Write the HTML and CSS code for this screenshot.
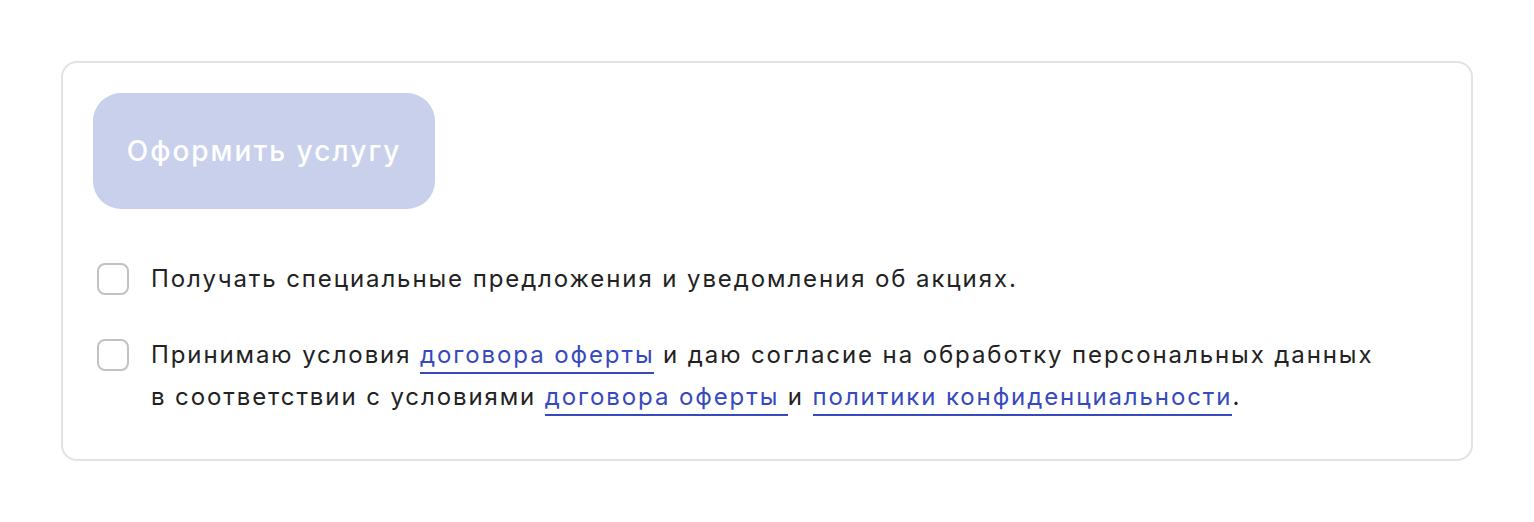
FILE: index.html
```html
<!DOCTYPE html>
<html lang="ru">
<head>
    <meta charset="UTF-8">
    <meta name="viewport" content="width=device-width, initial-scale=1.0">
    <title>Оформить услугу</title>
    <link rel="stylesheet" href="styles.css">
</head>
<body>
    <main class="order">
        <button class="order-btn" disabled>Оформить услугу</button>
        <div class="agree-list">
            <label class="agree">
                <input type="checkbox" class="agree-box">
                <span class="agree-text">Получать специальные предложения и уведомления об акциях.</span>
            </label>
            <label class="agree">
                <input type="checkbox" class="agree-box">
                <span class="agree-text">Принимаю условия <a href="#" class="agree-link">договора оферты</a> и даю согласие на обработку персональных данных<br>в соответствии с условиями <a href="#" class="agree-link">договора оферты </a> и <a href="#" class="agree-link">политики конфиденциальности</a>.</span>
            </label>
        </div>
    </main>
</body>
</html>
```

FILE: styles.css
```css
*{
    margin: 0;
    padding: 0;
    box-sizing: border-box;
}
body{
    background-color: #fff;
    padding: 61px;
    font-family: Inter, "Noto Sans", sans-serif;
    color: #222;
}
.order{
    border: 2px solid #e2e2e2;
    border-radius: 16px;
    padding: 30px 30px 41px;
}
.order-btn{
    display: block;
    width: 342px;
    height: 116px;
    border: none;
    border-radius: 28px;
    background-color: #c9d0ec;
    color: #fff;
    font-family: Inter, "Noto Sans", sans-serif;
    font-size: 28px;
    font-weight: 500;
    letter-spacing: 2px;
}
.agree-list{
    display: flex;
    flex-direction: column;
    gap: 34px;
    margin-top: 49px;
}
.agree{
    display: flex;
    align-items: flex-start;
    gap: 22px;
    padding-left: 4px;
}
.agree-box{
    appearance: none;
    flex: none;
    width: 32px;
    height: 32px;
    margin-top: 5px;
    border: 2px solid #c2c2c2;
    border-radius: 8px;
    background-color: #fff;
}
.agree-text{
    font-size: 24px;
    line-height: 42px;
    letter-spacing: 1.9px;
}
.agree-link{
    color: #3649be;
    text-decoration: none;
    border-bottom: 2px solid #3649be;
    padding-bottom: 3px;
}
```
